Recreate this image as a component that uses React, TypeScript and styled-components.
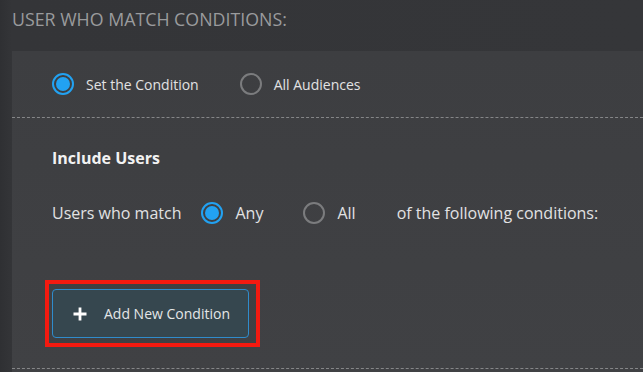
import styled, { createGlobalStyle } from 'styled-components';

const GlobalStyle = createGlobalStyle`
  html, body {
    margin: 0;
    padding: 0;
    background: #333437;
    font-family: 'Open Sans', 'Noto Sans', sans-serif;
    overflow: hidden;
  }
`;

const Page = styled.main`
  min-height: 372px;
  padding-left: 12px;
  background: linear-gradient(90deg, #2f3033 0px, #343538 12px, #353639 100%);
`;

const Heading = styled.h2`
  margin: 0;
  padding: 8px 0 20px 0;
  font-size: 17.8px;
  line-height: 23px;
  font-weight: 400;
  color: #9a9b9d;
`;

const Panel = styled.section`
  background: linear-gradient(180deg, #3d3e41 0%, #404144 100%);
  min-height: 321px;
`;

const Section = styled.div<{ $top: number; $bottom: number }>`
  padding: ${(p) => p.$top}px 0 ${(p) => p.$bottom}px 40px;
  border-bottom: 1px dashed #858688;
`;

const Row = styled.div<{ $size: number }>`
  display: flex;
  align-items: center;
  height: 24px;
  font-size: ${(p) => p.$size}px;
  color: #e2e2e3;
`;

const Option = styled.label<{ $gap: number }>`
  display: flex;
  align-items: center;
  gap: 12px;
  margin-right: ${(p) => p.$gap}px;
  cursor: pointer;
`;

const Radio = styled.span<{ $checked?: boolean }>`
  box-sizing: border-box;
  width: 22px;
  height: 22px;
  border-radius: 50%;
  border: 2px solid ${(p) => (p.$checked ? '#22a2f2' : '#7b7c7e')};
  padding: 2px;
  display: flex;

  &::after {
    content: '';
    flex: 1;
    border-radius: 50%;
    background: ${(p) => (p.$checked ? '#22a2f2' : 'transparent')};
  }
`;

const Lead = styled.span`
  margin-right: 20px;
`;

const SubTitle = styled.h3`
  margin: 0 0 32px;
  font-size: 16px;
  line-height: 22px;
  font-weight: 700;
  color: #f2f2f2;
`;

const Highlight = styled.div`
  display: inline-block;
  margin: 55px 0 0 -7px;
  border: 4px solid #f41a10;
  padding: 5px 7px 5px 3px;
`;

const AddButton = styled.button`
  display: flex;
  align-items: center;
  gap: 17px;
  width: 197px;
  height: 49px;
  padding: 0 0 0 20px;
  box-sizing: border-box;
  background: #36474f;
  border: 1px solid #2f8ccc;
  border-radius: 4px;
  color: #e4e6e7;
  font-family: inherit;
  font-size: 14px;
  cursor: pointer;
`;

const Plus = () => (
  <svg width="14" height="14" viewBox="0 0 14 14">
    <path d="M7 0.5v13M0.5 7h13" stroke="#ffffff" strokeWidth="2.8" />
  </svg>
);

export default function App() {
  return (
    <Page>
      <GlobalStyle />
      <Heading>USER WHO MATCH CONDITIONS:</Heading>
      <Panel>
        <Section $top={21} $bottom={21}>
          <Row $size={14}>
            <Option $gap={41}>
              <Radio $checked />
              Set the Condition
            </Option>
            <Option $gap={0}>
              <Radio />
              All Audiences
            </Option>
          </Row>
        </Section>
        <Section $top={29} $bottom={21}>
          <SubTitle>Include Users</SubTitle>
          <Row $size={16}>
            <Lead>Users who match</Lead>
            <Option $gap={40}>
              <Radio $checked />
              Any
            </Option>
            <Option $gap={41}>
              <Radio />
              All
            </Option>
            <span>of the following conditions:</span>
          </Row>
          <Highlight>
            <AddButton>
              <Plus />
              Add New Condition
            </AddButton>
          </Highlight>
        </Section>
      </Panel>
    </Page>
  );
}
